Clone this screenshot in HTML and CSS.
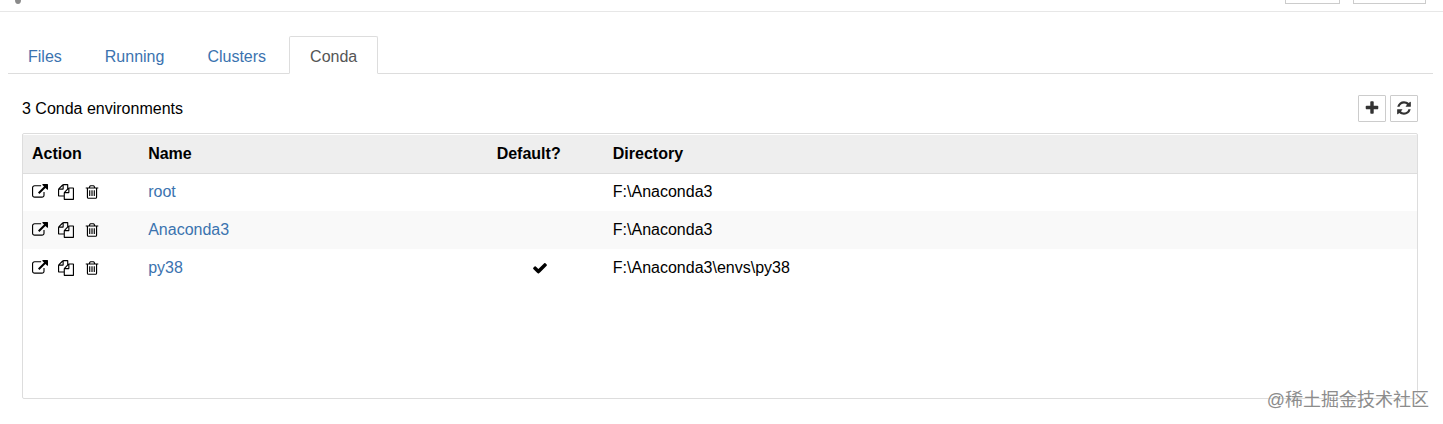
FILE: index.html
```html
<!DOCTYPE html>
<html lang="en">
<head>
  <meta charset="UTF-8">
  <title>Conda</title>
  <link rel="stylesheet" href="styles.css">
</head>
<body>
  <svg class="symbols" aria-hidden="true">
    <symbol id="open" viewBox="0 0 1792 1792"><path d="M1408 928v320q0 119-84.5 203.5t-203.5 84.5h-832q-119 0-203.5-84.5t-84.5-203.5v-832q0-119 84.5-203.5t203.5-84.5h704q14 0 23 9t9 23v64q0 14-9 23t-23 9h-704q-66 0-113 47t-47 113v832q0 66 47 113t113 47h832q66 0 113-47t47-113v-320q0-14 9-23t23-9h64q14 0 23 9t9 23zm384-864v512q0 26-19 45t-45 19-45-19l-176-176-652 652q-10 10-23 10t-23-10l-114-114q-10-10-10-23t10-23l652-652-176-176q-19-19-19-45t19-45 45-19h512q26 0 45 19t19 45z"/></symbol>
    <symbol id="copy" viewBox="0 0 1792 1792"><path d="M1696 384q40 0 68 28t28 68v1216q0 40-28 68t-68 28h-960q-40 0-68-28t-28-68v-288h-544q-40 0-68-28t-28-68v-672q0-40 20-88t48-76l408-408q28-28 76-48t88-20h416q40 0 68 28t28 68v328q68-40 128-40h416zm-544 213l-299 299h299v-299zm-640-384l-299 299h299v-299zm196 647l316-316v-416h-384v416q0 40-28 68t-68 28h-416v640h512v-256q0-40 20-88t48-76zm956 804v-1152h-384v416q0 40-28 68t-68 28h-416v640h896z"/></symbol>
    <symbol id="trash" viewBox="0 0 1792 1792"><path d="M704 736v576q0 14-9 23t-23 9h-64q-14 0-23-9t-9-23v-576q0-14 9-23t23-9h64q14 0 23 9t9 23zm256 0v576q0 14-9 23t-23 9h-64q-14 0-23-9t-9-23v-576q0-14 9-23t23-9h64q14 0 23 9t9 23zm256 0v576q0 14-9 23t-23 9h-64q-14 0-23-9t-9-23v-576q0-14 9-23t23-9h64q14 0 23 9t9 23zm128 724v-948h-896v948q0 22 7 40.5t14.5 27 10.5 8.5h832q3 0 10.5-8.5t14.5-27 7-40.5zm-672-1076h448l-48-117q-7-9-17-11h-317q-10 2-17 11zm928 32v64q0 14-9 23t-23 9h-96v948q0 83-47 143.5t-113 60.5h-832q-66 0-113-58.5t-47-141.5v-952h-96q-14 0-23-9t-9-23v-64q0-14 9-23t23-9h309l70-167q15-37 54-63t79-26h320q40 0 79 26t54 63l70 167h309q14 0 23 9t9 23z"/></symbol>
    <symbol id="refresh" viewBox="0 0 1792 1792"><path d="M1639 1056q0 5-1 7-64 268-268 434.5t-478 166.5q-146 0-282.5-55t-243.5-157l-129 129q-19 19-45 19t-45-19-19-45v-448q0-26 19-45t45-19h448q26 0 45 19t19 45-19 45l-137 137q71 66 161 102t187 36q134 0 250-65t186-179q11-17 53-117 8-23 30-23h192q13 0 22.5 9.5t9.5 22.5zm25-800v448q0 26-19 45t-45 19h-448q-26 0-45-19t-19-45 19-45l138-138q-148-137-349-137-134 0-250 65t-186 179q-11 17-53 117-8 23-30 23h-199q-13 0-22.5-9.5t-9.5-22.5v-7q65-268 270-434.5t480-166.5q146 0 284 55.5t245 156.5l130-129q19-19 45-19t45 19 19 45z"/></symbol>
    <symbol id="plus" viewBox="0 0 1792 1792"><path d="M1600 736v192q0 40-28 68t-68 28h-416v416q0 40-28 68t-68 28h-192q-40 0-68-28t-28-68v-416h-416q-40 0-68-28t-28-68v-192q0-40 28-68t68-28h416v-416q0-40 28-68t68-28h192q40 0 68 28t28 68v416h416q40 0 68 28t28 68z"/></symbol>
    <symbol id="check" viewBox="0 0 1792 1792"><path d="M1671 566q0 40-28 68l-724 724-136 136q-28 28-68 28t-68-28l-136-136-362-362q-28-28-28-68t28-68l136-136q28-28 68-28t68 28l294 295 656-657q28-28 68-28t68 28l136 136q28 28 28 68z"/></symbol>
  </svg>

  <header class="header">
    <svg class="logo" viewBox="0 0 6 4" aria-hidden="true"><path d="M0 0h6q0 4-3 4T0 0z"/></svg>
    <div class="header-box"></div>
    <div class="header-box wide"></div>
  </header>

  <nav class="tabs">
    <a href="#files">Files</a>
    <a href="#running">Running</a>
    <a href="#clusters">Clusters</a>
    <a href="#conda" class="active">Conda</a>
  </nav>

  <main class="content">
    <div class="toolbar">
      <span>3 Conda environments</span>
      <div class="toolbar-buttons">
        <button type="button" class="btn" aria-label="New environment"><svg class="icon"><use href="#plus"/></svg></button>
        <button type="button" class="btn" aria-label="Refresh"><svg class="icon"><use href="#refresh"/></svg></button>
      </div>
    </div>

    <div class="panel">
      <table class="envs">
        <thead>
          <tr><th class="col-action">Action</th><th class="col-name">Name</th><th class="col-default">Default?</th><th>Directory</th></tr>
        </thead>
        <tbody>
          <tr>
            <td><div class="actions">
              <button type="button" aria-label="Export"><svg class="icon"><use href="#open"/></svg></button>
              <button type="button" aria-label="Clone"><svg class="icon"><use href="#copy"/></svg></button>
              <button type="button" aria-label="Delete"><svg class="icon"><use href="#trash"/></svg></button>
            </div></td>
            <td><a href="#root">root</a></td>
            <td></td>
            <td>F:\Anaconda3</td>
          </tr>
          <tr>
            <td><div class="actions">
              <button type="button" aria-label="Export"><svg class="icon"><use href="#open"/></svg></button>
              <button type="button" aria-label="Clone"><svg class="icon"><use href="#copy"/></svg></button>
              <button type="button" aria-label="Delete"><svg class="icon"><use href="#trash"/></svg></button>
            </div></td>
            <td><a href="#anaconda3">Anaconda3</a></td>
            <td></td>
            <td>F:\Anaconda3</td>
          </tr>
          <tr>
            <td><div class="actions">
              <button type="button" aria-label="Export"><svg class="icon"><use href="#open"/></svg></button>
              <button type="button" aria-label="Clone"><svg class="icon"><use href="#copy"/></svg></button>
              <button type="button" aria-label="Delete"><svg class="icon"><use href="#trash"/></svg></button>
            </div></td>
            <td><a href="#py38">py38</a></td>
            <td class="default"><svg class="icon"><use href="#check"/></svg></td>
            <td>F:\Anaconda3\envs\py38</td>
          </tr>
        </tbody>
      </table>
    </div>
  </main>

  <div class="watermark">@稀土掘金技术社区</div>
</body>
</html>
```

FILE: styles.css
```css
* { box-sizing: border-box; }
body { margin: 0; min-height: 100vh; position: relative; background: #fff; color: #000; font: 16px/22px "Liberation Sans", Arial, sans-serif; }
a { color: #3b73af; text-decoration: none; }
button { font: inherit; cursor: pointer; }

.symbols { display: none; }
.icon { display: block; width: 16px; height: 16px; fill: currentColor; }

.header { display: flex; gap: 13px; height: 12px; padding: 0 17px 0 15px; border-bottom: 1px solid #e7e7e7; }
.logo { width: 6px; height: 4px; margin-right: auto; fill: #8a8a8a; }
.header-box { width: 55px; height: 4px; border: 1px solid #ccc; border-top: 0; }
.header-box.wide { width: 73px; }

.tabs { display: flex; gap: 3px; margin: 24px 10px 0 8px; border-bottom: 1px solid #ddd; }
.tabs a { margin-bottom: -1px; padding: 9px 19px 5px; border: 1px solid transparent; border-radius: 2px 2px 0 0; }
.tabs .active { padding: 9px 20px 5px; color: #555; background: #fff; border-color: #ddd; border-bottom-color: #fff; }

.content { padding: 21px 25px 0 22px; }
.toolbar { display: flex; justify-content: space-between; align-items: center; margin-bottom: 11px; }
.toolbar-buttons { display: flex; gap: 4px; }
.btn { width: 28px; height: 27px; padding: 0 5px; border: 1px solid #ccc; border-radius: 1px; background: #fff; color: #333; }
.btn .icon { margin-top: -2px; }

.panel { min-height: 266px; border: 1px solid #ddd; border-radius: 2px; padding-top: 1px; }
.envs { width: 100%; border-collapse: collapse; table-layout: fixed; }
.envs th, .envs td { height: 38px; padding: 0 9px; text-align: left; }
.envs th { background: #eee; border-bottom: 1px solid #ddd; }
.envs tbody tr:nth-child(even) { background: #f9f9f9; }
.col-action, .col-default { width: 8.333%; }
.col-name { width: 25%; }
.actions { display: flex; gap: 10px; }
.actions button { padding: 0; border: 0; background: none; color: #000; }
.envs .default .icon { margin-left: 35px; }

.watermark { position: absolute; right: 14px; bottom: 11px; color: #8c8c8c; font: 18px/26px "Liberation Sans", "Noto Sans CJK SC", sans-serif; text-shadow: 0 0 1px #fff; }
```
